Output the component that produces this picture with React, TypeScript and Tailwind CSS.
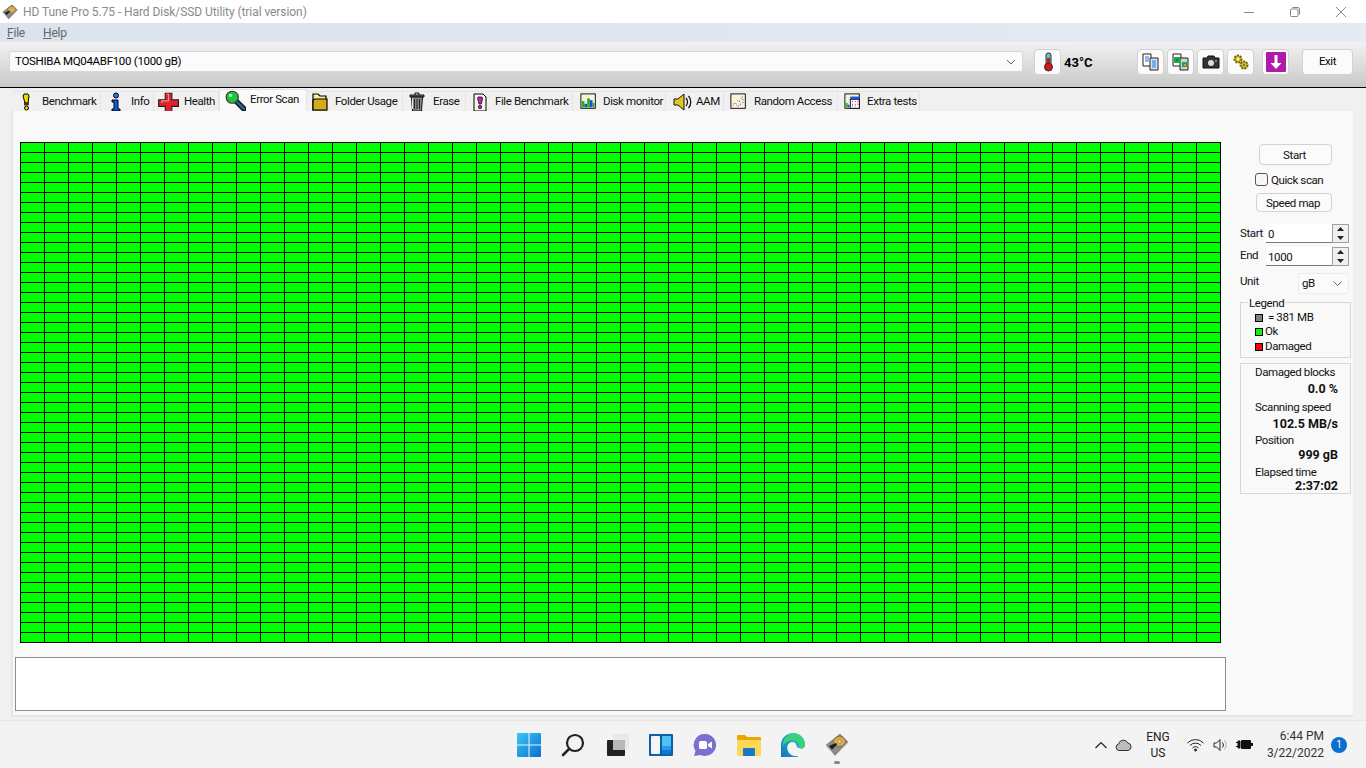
import { ReactNode } from "react";

const cells = Array.from({ length: 2500 }, (_, i) => i);

function Frame({ d, children }: { d?: number; children: ReactNode }) {
  const s = d ?? 20;
  return <svg width={s} height={s} viewBox="0 0 20 20" className="shrink-0">{children}</svg>;
}

const tabIcons: Record<string, ReactNode> = {
  Benchmark: <Frame><path d="M7 2h4l1 2-1 7H8L6 4z" fill="#e8d800" stroke="#000" /><rect x="7.5" y="11" width="4" height="2" fill="#555" stroke="#000" strokeWidth=".6" /><circle cx="9.5" cy="16" r="2" fill="#e8d800" stroke="#000" /></Frame>,
  Info: <Frame><circle cx="10" cy="3.5" r="2.5" fill="#1c7cf0" stroke="#000" /><path d="M6 8h6v9h2v2H6v-2h2v-7H6z" fill="#0b5be8" stroke="#000" /></Frame>,
  Health: <Frame d={22}><path d="M7.5 2h6v6h6v6h-6v6h-6v-6h-6V8h6z" fill="#e0202a" stroke="#222" /><path d="M8.5 3h2v6h-6v2" fill="none" stroke="#ff8a8a" /></Frame>,
  "Error Scan": <Frame d={22}><path d="M11 11l7 7" stroke="#111" strokeWidth="5" strokeLinecap="round" /><path d="M12 12l6 6" stroke="#2a5fa0" strokeWidth="2.5" strokeLinecap="round" /><circle cx="7.5" cy="7.5" r="5.5" fill="#1fc43a" stroke="#333" /><circle cx="6" cy="6" r="1.6" fill="#a6f0b0" /></Frame>,
  "Folder Usage": <Frame d={20}><path d="M3 2h5l2 2h6v14H3z" fill="#f6ec9a" stroke="#000" strokeWidth="1.2" /><path d="M5 7h12v11H3V8z" fill="#d4ac18" stroke="#000" strokeWidth="1.2" /></Frame>,
  Erase: <Frame d={20}><path d="M3 3h14v2H3z" fill="#777" stroke="#111" /><path d="M8 3V1h4v2" fill="none" stroke="#111" /><path d="M4.5 5h11l-1 14h-9z" fill="#8a8a8a" stroke="#111" /><path d="M7.5 7v10M10 7v10M12.5 7v10" stroke="#222" /><path d="M5.5 6v11" stroke="#ddd" /></Frame>,
  "File Benchmark": <Frame d={20}><path d="M4 2h9l3 3v14H4z" fill="#f6f6e6" stroke="#000" /><path d="M8 5h4l.5 2-1.2 5H9l-1.3-5z" fill="#c020c0" stroke="#000" strokeWidth=".7" /><circle cx="10" cy="15" r="1.7" fill="#c020c0" stroke="#000" strokeWidth=".7" /></Frame>,
  "Disk monitor": <Frame d={18}><rect x="1" y="1" width="16" height="16" fill="#f6f4d8" stroke="#000" /><path d="M2 9h3v7H2z" fill="#20b020" /><path d="M5 12h3v4H5z" fill="#1850e0" /><path d="M8 6h3v10H8z" fill="#20b020" /><path d="M11 8h3v8h-3z" fill="#1850e0" /><path d="M14 11h2v5h-2z" fill="#20b020" /></Frame>,
  AAM: <Frame d={20}><path d="M1 7h4l6-5v16l-6-5H1z" fill="#e0c820" stroke="#111" /><path d="M13 6c2 2 2 6 0 8M15.5 4c3 3 3 9 0 12" fill="none" stroke="#111" strokeWidth="1.3" /></Frame>,
  "Random Access": <Frame d={18}><rect x="1" y="1" width="16" height="16" fill="#f8f4dc" stroke="#000" /><path d="M3 13h1v1H3zM6 11h1v1H6zM9 14h1v1H9zM8 8h1v1H8zM12 6h1v1h-1zM14 10h1v1h-1z" fill="#e01010" /><path d="M4 11h1v1H4zM7 13h1v1H7zM10 9h1v1h-1zM11 12h1v1h-1zM13 4h1v1h-1zM14 7h1v1h-1z" fill="#1030d0" /></Frame>,
  "Extra tests": <Frame d={18}><rect x="1" y="1" width="16" height="16" fill="#f6f4d8" stroke="#000" /><path d="M2 11h2v5H2z" fill="#20b020" /><path d="M4 13h2v3H4z" fill="#1850e0" /><rect x="7" y="7" width="10" height="10" fill="#fff" stroke="#000" /><rect x="7" y="4" width="10" height="3" fill="#1850e0" /><path d="M9 9h1v1H9zM12 9h1v1h-1zM15 9h1v1h-1zM9 12h1v1H9zM15 12h1v1h-1z" fill="#e01010" /><path d="M12 12h1v1h-1zM9 14h1v1H9zM12 14h1v1h-1z" fill="#1850e0" /></Frame>,
};

const tabs = [
  { name: "Benchmark", w: "w-[88px]", gap: "pl-[4px] gap-[5px]" },
  { name: "Info", w: "w-[53px]", gap: "pl-[5px] gap-[5px]" },
  { name: "Health", w: "w-[65px]", gap: "pl-[3px] gap-[5px]" },
  { name: "Error Scan", w: "w-[88px]", gap: "pl-[4px] gap-[4px]" },
  { name: "Folder Usage", w: "w-[96px]", gap: "pl-[3px] gap-[5px]" },
  { name: "Erase", w: "w-[63px]", gap: "pl-[4px] gap-[6px]" },
  { name: "File Benchmark", w: "w-[107px]", gap: "pl-[4px] gap-[5px]" },
  { name: "Disk monitor", w: "w-[93px]", gap: "pl-[7px] gap-[5px]" },
  { name: "AAM", w: "w-[58px]", gap: "pl-[7px] gap-[3px]" },
  { name: "Random Access", w: "w-[114px]", gap: "pl-[6px] gap-[6px]" },
  { name: "Extra tests", w: "w-[82px]", gap: "pl-[6px] gap-[5px]" },
];

function ToolButton({ children, w }: { children: ReactNode; w?: string }) {
  return (
    <div className={`${w ?? "w-[27px]"} h-[26px] flex items-center justify-center bg-[#fbfbfb] border border-[#d2d2d2] rounded-[4px] shrink-0`}>
      {children}
    </div>
  );
}

function SpinRow({ label, value, labelClass }: { label: string; value: string; labelClass: string }) {
  return (
    <div className="flex h-[19px]">
      <div className={`w-[26px] ${labelClass}`}>{label}</div>
      <div className="w-[66px] h-[19px] bg-white border-b border-[#7a7a7a] pl-[2px] leading-[21px]">{value}</div>
      <div className="w-[17px] h-[19px] border border-[#a0a0a0] bg-[#f0f0f0] flex flex-col items-center justify-around">
        <svg width="7" height="4" viewBox="0 0 7 4"><path d="M3.5 0L7 4H0z" fill="#222" /></svg>
        <svg width="7" height="4" viewBox="0 0 7 4"><path d="M0 0h7L3.5 4z" fill="#222" /></svg>
      </div>
    </div>
  );
}

function Stat({ label, value, valueClass }: { label: string; value: string; valueClass: string }) {
  return (
    <>
      <div className="pl-[14px] h-[16px] leading-[16px]">{label}</div>
      <div className={`pr-[12px] text-right font-bold text-[12.5px] tracking-normal leading-[16px] h-[16px] ${valueClass}`}>{value}</div>
    </>
  );
}

function DriveIcon({ s }: { s: number }) {
  return (
    <svg width={s} height={s} viewBox="0 0 24 24" className="shrink-0">
      <path d="M1 12L15 1l8 8-13 14z" fill="#2e2e2e" />
      <path d="M1 12L15 1l8 8-1 1.500-12 11z" fill="#8c8c8c" />
      <path d="M1 12l9 10 13-13v1.500L10 23.500 1 13.500z" fill="#d8d8d8" />
      <ellipse cx="14.500" cy="8.500" rx="6" ry="5" fill="#d9a957" stroke="#7a5a20" strokeWidth=".7" />
      <ellipse cx="14.500" cy="8.500" rx="2" ry="1.600" fill="#f2dca8" stroke="#7a5a20" strokeWidth=".5" />
      <path d="M4 13l7-3 1 1.500-5 5z" fill="#1c1c1c" />
    </svg>
  );
}

export default function App() {
  return (
    <div className="w-[1366px] h-[768px] overflow-hidden bg-[#f0f0f0] text-[11.5px] tracking-[-0.4px] text-[#111] font-['Roboto','Liberation_Sans',sans-serif] flex flex-col">
      {/* title bar */}
      <div className="h-[23px] bg-white flex items-center shrink-0">
        <div className="ml-[2px] mr-[5px]"><DriveIcon s={16} /></div>
        <div className="text-[#8a8a8a] text-[12px] tracking-[-0.07px]">HD Tune Pro 5.75 - Hard Disk/SSD Utility (trial version)</div>
        <div className="ml-auto flex items-center text-[#777]">
          <div className="w-[46px] flex justify-center"><svg width="10" height="10" viewBox="0 0 10 10"><path d="M0 5.5h10" stroke="#888" /></svg></div>
          <div className="w-[46px] flex justify-center"><svg width="10" height="10" viewBox="0 0 10 10" fill="none" stroke="#888"><rect x=".5" y="2" width="7.5" height="7.5" rx="1" /><path d="M2.5 .5h5.5a1.5 1.5 0 011.5 1.5v5.5" /></svg></div>
          <div className="w-[46px] flex justify-center"><svg width="10" height="10" viewBox="0 0 10 10"><path d="M0 0l10 10M10 0L0 10" stroke="#888" /></svg></div>
          <div className="w-[2px]" />
        </div>
      </div>

      {/* menu bar */}
      <div className="h-[19px] shrink-0 bg-gradient-to-r from-[#dbe3ed] to-[#e6ebf3] flex items-center pl-[7px] gap-[18px] text-[#666] text-[12px] tracking-[-0.2px]">
        <span><u>F</u>ile</span>
        <span><u>H</u>elp</span>
      </div>

      {/* toolbar */}
      <div className="h-[46px] shrink-0 bg-gradient-to-b from-[#f2f2f2] to-[#c9c9c9] border-b border-black flex items-start pt-[7px] pl-[9px]">
        <div className="w-[1014px] h-[21px] mt-[2px] bg-[#fbfbfb] border border-[#d8d8d8] rounded-[2px] flex items-center pl-[5px] pr-[6px] text-black tracking-[-0.3px]">
          <span>TOSHIBA MQ04ABF100 (1000 gB)</span>
          <svg width="10" height="6" viewBox="0 0 10 6" className="ml-auto"><path d="M1 1l4 4 4-4" fill="none" stroke="#666" /></svg>
        </div>
        <div className="ml-[11px]">
          <ToolButton>
            <svg width="14" height="20" viewBox="0 0 14 20"><rect x="5" y="1" width="5" height="12" rx="2" fill="#58c8c8" stroke="#333" /><rect x="6" y="6" width="3" height="8" fill="#d01818" /><circle cx="7.5" cy="15" r="4" fill="#d01818" stroke="#333" /></svg>
          </ToolButton>
        </div>
        <div className="ml-[3px] w-[73px] h-[26px] leading-[27px] font-bold text-[13px] tracking-normal text-black">43°C</div>
        <div className="flex gap-[3px]">
          <ToolButton>
            <svg width="18" height="18" viewBox="0 0 18 18"><path d="M1 1h8v12H1z" fill="#fff" stroke="#222" /><path d="M8 5h8v12H8z" fill="#d8e4f0" stroke="#222" /><path d="M3 4h4M3 6h4M3 8h4M10 8h4M10 10h4M10 12h4M10 14h4" stroke="#1878e8" /></svg>
          </ToolButton>
          <ToolButton>
            <svg width="18" height="18" viewBox="0 0 18 18"><path d="M1 1h8v12H1z" fill="#fff" stroke="#222" /><path d="M8 5h8v12H8z" fill="#c8d4d8" stroke="#222" /><path d="M2 4h6v6H2z" fill="#18b030" /><path d="M4 6h2v2H4z" fill="#1860e0" /><path d="M10 9h5v5h-5z" fill="#18b030" /><path d="M12 11h2v2h-2z" fill="#e0a010" /></svg>
          </ToolButton>
          <ToolButton>
            <svg width="18" height="16" viewBox="0 0 18 16"><path d="M1 4h4l1-2h6l1 2h4v10H1z" fill="#333" stroke="#111" /><circle cx="9" cy="9" r="3" fill="#ddd" /><rect x="13" y="6" width="2" height="2" fill="#20c040" /></svg>
          </ToolButton>
          <ToolButton>
            <svg width="18" height="18" viewBox="0 0 18 18"><circle cx="6" cy="6" r="3.500" fill="#d8c020" stroke="#6a6000" strokeWidth="2" strokeDasharray="2 1" /><circle cx="12" cy="12" r="3.500" fill="#d8c020" stroke="#6a6000" strokeWidth="2" strokeDasharray="2 1" /><circle cx="6" cy="6" r="1.200" fill="#fff6a0" /><circle cx="12" cy="12" r="1.200" fill="#777" /></svg>
          </ToolButton>
          <div className="ml-[5px]">
            <ToolButton>
              <svg width="20" height="20" viewBox="0 0 20 20"><rect width="20" height="20" rx="1" fill="#b01aa8" /><path d="M8.5 3h3v8h4L10 17 4.500 11h4z" fill="#fff" /></svg>
            </ToolButton>
          </div>
          <div className="ml-[10px]">
            <ToolButton w="w-[51px]"><span className="text-black">Exit</span></ToolButton>
          </div>
        </div>
      </div>

      {/* tabs */}
      <div className="h-[23px] shrink-0 flex items-end pl-[13px]">
        {tabs.map((t) => {
          const active = t.name === "Error Scan";
          return (
            <div
              key={t.name}
              className={`${t.w} ${t.gap} flex items-center border-t border-r border-[#e4e4e4] ${active ? "h-[22px] bg-[#f9f9f9] border-l pb-[1px]" : "h-[20px] bg-[#f0f0f0]"}`}
            >
              {tabIcons[t.name]}
              <span className="whitespace-nowrap">{t.name}</span>
            </div>
          );
        })}
      </div>

      {/* tab page */}
      <div className="ml-[11px] w-[1342px] h-[606px] shrink-0 bg-[#f9f9f9] border-2 border-[#e6e6e6] border-r-0 border-t-0 flex">
        <div className="w-[1219px] shrink-0 pl-[2px]">
          <div className="mt-[31px] ml-[5px] w-[1201px] h-[501px] bg-black grid grid-cols-[repeat(50,24px)] grid-rows-[repeat(50,10px)] pl-px pt-px">
            {cells.map((c) => (
              <div key={c} className="bg-[#00ff00] border-r border-b border-black" />
            ))}
          </div>
          <div className="mt-[14px] w-[1211px] h-[54px] bg-white border border-[#8b8b9b]" />
        </div>

        <div className="flex-1 pl-[8px] text-[#111]">
          <div className="mt-[33px] ml-[19px] w-[73px] h-[21px] pt-[2px] pr-[2px] bg-[#fbfbfb] border border-[#d2d2d2] rounded-[4px] flex items-center justify-center">Start</div>
          <div className="mt-[8px] ml-[15px] h-[13px] flex items-center gap-[3px]">
            <div className="w-[13px] h-[13px] bg-[#f6f6f6] border border-[#555] rounded-[3px]" />
            <span className="pt-[2px]">Quick scan</span>
          </div>
          <div className="mt-[7px] ml-[16px] w-[76px] h-[19px] pt-[2px] pr-[2px] bg-[#fbfbfb] border border-[#d2d2d2] rounded-[4px] flex items-center justify-center">Speed map</div>
          <div className="mt-[12px]">
            <SpinRow label="Start" value="0" labelClass="leading-[19px]" />
          </div>
          <div className="mt-[4px]">
            <SpinRow label="End" value="1000" labelClass="leading-[17px]" />
          </div>
          <div className="mt-[7px] h-[21px] flex">
            <div className="w-[58px] leading-[17px]">Unit</div>
            <div className="w-[51px] h-[21px] bg-[#fbfbfb] border border-[#ececec] rounded-[2px] flex items-center pl-[3px] pr-[6px]">
              <span>gB</span>
              <svg width="9" height="5" viewBox="0 0 9 5" className="ml-auto"><path d="M.5.5l4 4 4-4" fill="none" stroke="#666" /></svg>
            </div>
          </div>
          <div className="relative mt-[8px] w-[111px] h-[56px] border border-[#d8d8d8] pl-[14px] pt-[7px]">
            <span className="absolute left-[7px] top-[-7px] bg-[#f9f9f9] px-px leading-[14px]">Legend</span>
            <div className="h-[15px] flex items-center"><span className="w-[8px] h-[8px] bg-[#808080] border border-black mr-[5px]" />= 381 MB</div>
            <div className="h-[14px] flex items-center"><span className="w-[8px] h-[8px] bg-[#00ff00] border border-black mr-[2px]" />Ok</div>
            <div className="h-[15px] flex items-center"><span className="w-[8px] h-[8px] bg-[#ff0000] border border-black mr-[2px]" />Damaged</div>
          </div>
          <div className="mt-[5px] w-[111px] h-[131px] border border-[#d8d8d8]">
            <Stat label="Damaged blocks" value="0.0 %" valueClass="mt-[1px] mb-[2px]" />
            <Stat label="Scanning speed" value="102.5 MB/s" valueClass="mt-[1px]" />
            <Stat label="Position" value="999 gB" valueClass="mt-[-1px] mb-[1px]" />
            <Stat label="Elapsed time" value="2:37:02" valueClass="mt-[-2px]" />
          </div>
        </div>
      </div>

      {/* window bottom edge */}
      <div className="flex-1" />

      {/* taskbar */}
      <div className="h-[48px] shrink-0 bg-[#f3f3f3] border-t border-[#e6e6e6] grid grid-cols-[1fr_auto_1fr] items-center text-[#222] tracking-normal">
        <div />
        <div className="flex">
          <div className="w-[44px] flex justify-center">
            <svg width="24" height="24" viewBox="0 0 24 24"><defs><linearGradient id="w" x1="0" y1="0" x2="1" y2="1"><stop offset="0" stopColor="#3cc6f8" /><stop offset="1" stopColor="#0a6fd0" /></linearGradient></defs><path d="M0 1a1 1 0 011-1h10.500v11.500H0zM12.500 0H23a1 1 0 011 1v10.500H12.500zM0 12.500h11.500V24H1a1 1 0 01-1-1zM12.500 12.500H24V23a1 1 0 01-1 1H12.500z" fill="url(#w)" /></svg>
          </div>
          <div className="w-[44px] flex justify-center">
            <svg width="24" height="24" viewBox="0 0 24 24" fill="none" stroke="#222" strokeWidth="2.200"><circle cx="14" cy="10" r="8" /><path d="M8 16l-6 6" strokeLinecap="round" strokeWidth="2.600" /></svg>
          </div>
          <div className="w-[44px] flex justify-center">
            <svg width="24" height="24" viewBox="0 0 24 24"><rect x="2" y="7" width="18" height="16" rx="1" fill="#222" /><rect x="8" y="1" width="16" height="16" rx="1" fill="#e8e8e8" /><rect x="8" y="7" width="12" height="10" fill="#b8b8b8" /></svg>
          </div>
          <div className="w-[44px] flex justify-center">
            <svg width="24" height="24" viewBox="0 0 24 24"><rect width="24" height="22" y="1" rx="1" fill="#0f5ea8" /><rect x="2" y="3" width="9" height="18" rx="1" fill="#f4f4f4" /><rect x="13" y="3" width="9" height="10" fill="#4cc2f4" /><rect x="13" y="13" width="9" height="4" fill="#2a9ae8" /><rect x="13" y="17" width="9" height="4" fill="#1078d4" /></svg>
          </div>
          <div className="w-[44px] flex justify-center">
            <svg width="24" height="24" viewBox="0 0 24 24"><path d="M12.500 1a11 11 0 11-5 21L1 23l1.500-5A11 11 0 0112.500 1z" fill="#7b6fd0" /><rect x="6" y="8" width="8" height="8" rx="1.500" fill="#fff" /><path d="M15 11l4-2.500v7L15 13z" fill="#fff" /></svg>
          </div>
          <div className="w-[44px] flex justify-center">
            <svg width="24" height="24" viewBox="0 0 24 24"><path d="M0 3a1 1 0 011-1h7l2 2h13a1 1 0 011 1v3H0z" fill="#e8a800" /><path d="M0 7h24v15a1 1 0 01-1 1H1a1 1 0 01-1-1z" fill="#fcd75a" /><rect x="6" y="15" width="12" height="8" rx="1" fill="#1878c8" /></svg>
          </div>
          <div className="w-[44px] flex justify-center">
            <svg width="24" height="24" viewBox="0 0 24 24"><defs><linearGradient id="e" x1="0" y1="1" x2="1" y2="0"><stop offset="0" stopColor="#0c59a4" /><stop offset="1" stopColor="#2cc4e0" /></linearGradient></defs><path d="M12 0a12 12 0 0112 12c0 3-3 4-6 3-4-1-1-5-6-6-5 0-7 5-5 9 1 3 5 6 10 5A12 12 0 110 12 12 12 0 0112 0z" fill="url(#e)" /><path d="M12 0a12 12 0 0112 12c0 3-3 4-6 3 1-5-4-9-10-7-3 1-5 3-6 5A12 12 0 0112 0z" fill="#3bd07c" /></svg>
          </div>
          <div className="w-[44px] flex flex-col items-center relative">
            <DriveIcon s={24} />
            <div className="absolute bottom-[-7px] w-[6px] h-[3px] rounded-full bg-[#888]" />
          </div>
        </div>
        <div className="flex items-center justify-end h-full pr-[29px] text-[12px]">
          <svg width="14" height="8" viewBox="0 0 14 8" className="mr-[7px]"><path d="M1.500 7L7 1.500 12.500 7" fill="none" stroke="#222" strokeWidth="1.200" /></svg>
          <svg width="17" height="12" viewBox="0 0 17 12" className="mr-[6px]"><path d="M4 11.500a3.300 3.300 0 01-.3-6.500 4.800 4.800 0 019.100-1 3.800 3.800 0 01.2 7.500z" fill="#bdbdbd" stroke="#333" /></svg>
          <div className="w-[40px] text-center leading-[16px] text-[12px] mr-[9px]">
            <div>ENG</div>
            <div>US</div>
          </div>
          <svg width="17" height="14" viewBox="0 0 17 14" fill="none" stroke="#222" className="mr-[9px]"><path d="M.5 5a11 11 0 0116 0M3 7.500a7.500 7.500 0 0111 0M5.500 10a4 4 0 016 0" /><circle cx="8.500" cy="12" r="1" fill="#222" /></svg>
          <svg width="15" height="14" viewBox="0 0 15 14" fill="none" stroke="#222" className="mr-[8px]"><path d="M1 5h2.500L7 1.500v11L3.500 9H1z" /><path d="M9.500 4.500a4 4 0 010 5" /><path d="M11.500 2.500a7 7 0 010 9" stroke="#aaa" /></svg>
          <svg width="17" height="13" viewBox="0 0 17 13" className="mr-[13px]"><path d="M0 4.500h3M0 8.500h3M2 3h2v7H2z" stroke="#111" fill="#111" strokeWidth="1" /><rect x="5" y="2" width="10" height="9" rx="1" fill="#111" /><rect x="15" y="5" width="2" height="3" fill="#111" /></svg>
          <div className="w-[58px] text-right leading-[17px] text-[#333] mr-[7px] whitespace-nowrap">
            <div>6:44 PM</div>
            <div>3/22/2022</div>
          </div>
          <div className="w-[16px] h-[16px] rounded-full bg-[#0a6fd0] text-white text-[10px] flex items-center justify-center mr-[-10px]">1</div>
        </div>
      </div>
    </div>
  );
}
